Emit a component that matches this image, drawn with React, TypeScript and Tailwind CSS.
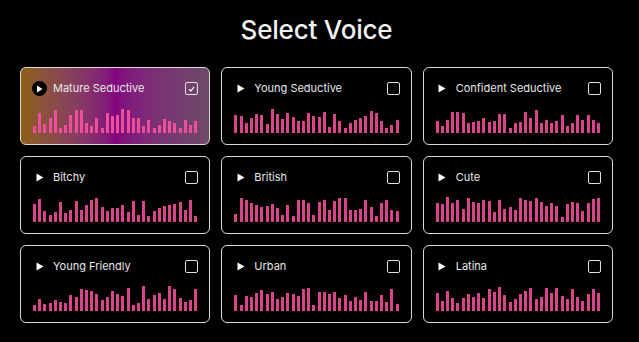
import React from 'react';

type Voice = { name: string; bars: number[] };

// deterministic pseudo-random bar heights
function makeBars(seed: number): number[] {
  let s = seed;
  const out: number[] = [];
  for (let i = 0; i < 32; i++) {
    s = (s * 9301 + 49297) % 233280;
    out.push(5 + Math.round((s / 233280) * 20));
  }
  return out;
}

const toH = (tops: number[]) => tops.map((t) => Math.max(4, Math.round((220 - t) / 3)));

const voices: Voice[] = [
  {
    name: 'Mature Seductive',
    bars: toH([198, 160, 192, 175, 150, 205, 195, 165, 150, 150, 190, 200, 175, 205, 160, 170, 165, 148, 152, 175, 175, 198, 180, 205, 195, 178, 185, 190, 205, 180, 195, 185]),
  },
  {
    name: 'Young Seductive',
    bars: toH([165, 168, 190, 175, 163, 165, 192, 148, 162, 178, 160, 172, 185, 185, 160, 170, 172, 157, 202, 162, 185, 205, 190, 180, 175, 168, 155, 160, 185, 205, 195, 180]),
  },
  {
    name: 'Confident Seductive',
    bars: toH([185, 198, 180, 158, 157, 160, 190, 187, 185, 175, 188, 185, 163, 163, 205, 190, 187, 157, 175, 152, 190, 180, 190, 185, 165, 200, 190, 166, 180, 166, 182, 190]),
  },
  { name: 'Bitchy', bars: makeBars(11) },
  { name: 'British', bars: makeBars(23) },
  { name: 'Cute', bars: makeBars(37) },
  {
    name: 'Young Friendly',
    bars: toH([203, 185, 200, 196, 187, 193, 195, 172, 178, 155, 157, 160, 170, 188, 178, 160, 168, 175, 150, 203, 197, 145, 183, 172, 167, 185, 146, 155, 181, 193, 187, 155]),
  },
  { name: 'Urban', bars: makeBars(59) },
  {
    name: 'Latina',
    bars: toH([167, 190, 160, 180, 195, 180, 170, 178, 165, 180, 155, 162, 148, 172, 192, 185, 170, 160, 152, 185, 178, 152, 165, 152, 175, 183, 155, 178, 190, 168, 155, 165]),
  },
];

function PlayIcon({ active }: { active: boolean }) {
  if (active) {
    return (
      <span className="flex h-[15px] w-[15px] items-center justify-center rounded-full bg-black">
        <svg width="7" height="8" viewBox="0 0 7 8">
          <path d="M1 0.5 L6.5 4 L1 7.5 Z" fill="white" />
        </svg>
      </span>
    );
  }
  return (
    <span className="flex h-[15px] w-[15px] items-center justify-center">
      <svg width="8" height="9" viewBox="0 0 8 9">
        <path d="M0.5 0.5 L7.5 4.5 L0.5 8.5 Z" fill="white" />
      </svg>
    </span>
  );
}

function VoiceCard({ voice, selected }: { voice: Voice; selected: boolean }) {
  return (
    <div
      className={
        selected
          ? 'flex h-[78px] flex-col rounded-md border border-[#d8d8d8] bg-gradient-to-r from-[#8e5f0c] via-[#82037f] to-[#6e4a68] px-[11px] pt-[13px] pb-[11px]'
          : 'flex h-[78px] flex-col rounded-md border border-[#d8d8d8] bg-black px-[11px] pt-[13px] pb-[11px]'
      }
    >
      <div className="flex h-[15px] items-center">
        <PlayIcon active={selected} />
        <span className="ml-[6px] text-[11px] leading-none text-[#e8e8e8]">{voice.name}</span>
        <span
          className={
            selected
              ? 'ml-auto flex h-[13px] w-[13px] items-center justify-center rounded-[2px] border border-[#e0e0e0]'
              : 'ml-auto h-[13px] w-[13px] rounded-[2px] border border-[#e0e0e0]'
          }
        >
          {selected && (
            <svg width="7" height="6" viewBox="0 0 7 6">
              <path d="M1 3.2 L2.8 5 L6 1" stroke="white" strokeWidth="1.2" fill="none" />
            </svg>
          )}
        </span>
      </div>
      <div className="mt-auto flex h-[26px] items-end justify-between px-[1px]">
        {voice.bars.map((h, i) => (
          <div
            key={i}
            className={selected ? 'w-[3px] bg-[#ee4f9b]' : 'w-[3px] bg-[#d9448a]'}
            style={{ height: h }}
          />
        ))}
      </div>
    </div>
  );
}

export default function App() {
  return (
    <div
      className="flex h-[342px] w-[639px] flex-col items-center bg-black pr-[6px]"
      style={{ fontFamily: 'Inter, "Noto Sans", sans-serif' }}
    >
      <h1 className="mt-[14px] text-[26px] font-medium leading-[32px] tracking-[-0.2px] text-[#f2f2f2]">
        Select Voice
      </h1>
      <div className="mt-[21px] grid w-[593px] grid-cols-3 gap-x-[11px] gap-y-[11px]">
        {voices.map((v, i) => (
          <VoiceCard key={v.name} voice={v} selected={i === 0} />
        ))}
      </div>
    </div>
  );
}
